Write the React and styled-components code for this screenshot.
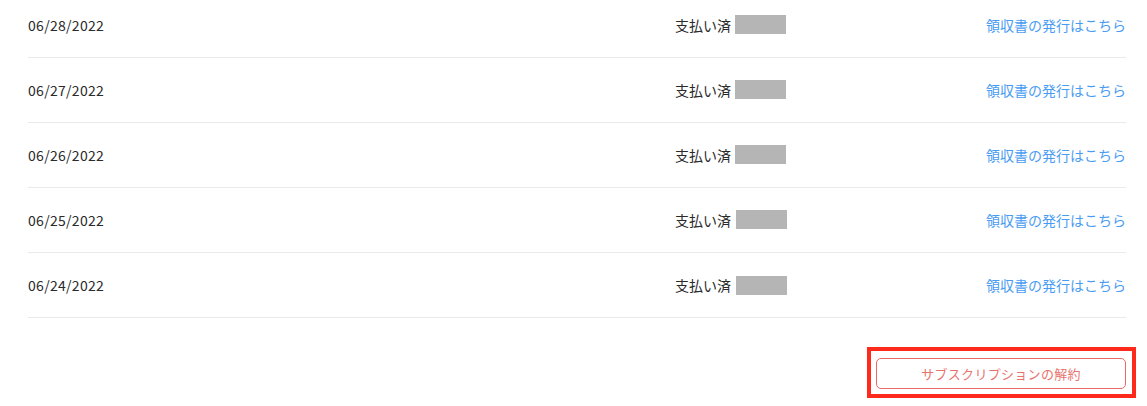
import React from 'react';
import styled, { createGlobalStyle } from 'styled-components';

const GlobalStyle = createGlobalStyle`
  html, body {
    margin: 0;
    padding: 0;
    background: #fff;
  }
  body {
    font-family: "Noto Sans CJK JP", "Liberation Sans", sans-serif;
    color: #222;
  }
`;

const Page = styled.div`
  width: 1147px;
  height: 406px;
  overflow: hidden;
  padding: 0 21px 0 28px;
  box-sizing: border-box;
`;

const List = styled.div`
  margin-top: -7px;
`;

const Row = styled.div`
  display: grid;
  grid-template-columns: 647px 1fr auto;
  align-items: center;
  height: 64px;
  border-bottom: 1px solid #e9e9e9;
  font-size: 14px;
`;

const DateCell = styled.span`
  letter-spacing: 0.3px;
  color: #2a2a2a;
`;

const Status = styled.span`
  display: flex;
  align-items: center;
  color: #2a2a2a;
`;

const Redacted = styled.span`
  display: inline-block;
  width: 51px;
  height: 19px;
  margin-left: ${(p) => p.$offset}px;
  margin-top: ${(p) => p.$lift}px;
  background: #b5b5b5;
`;

const ReceiptLink = styled.a`
  color: #4a9cf2;
  text-decoration: none;
  cursor: pointer;
`;

const Footer = styled.div`
  display: flex;
  justify-content: flex-end;
  padding-top: 40px;
`;

const Highlight = styled.div`
  position: relative;
`;

const Marker = styled.div`
  position: absolute;
  top: -11px;
  bottom: -9px;
  left: -9px;
  right: -10px;
  border: 4px solid #ff2a1c;
  pointer-events: none;
`;

const CancelButton = styled.button`
  width: 250px;
  height: 31px;
  border: 1px solid #ea6a66;
  border-radius: 5px;
  background: #fff;
  color: #e8736e;
  font-family: "Noto Sans CJK JP", sans-serif;
  font-size: 13px;
  letter-spacing: 0.3px;
  cursor: pointer;
`;

const payments = [
  { date: '06/28/2022', offset: 4, lift: -2 },
  { date: '06/27/2022', offset: 4, lift: -2 },
  { date: '06/26/2022', offset: 4, lift: -2 },
  { date: '06/25/2022', offset: 5, lift: -1 },
  { date: '06/24/2022', offset: 5, lift: 1 },
];

const App = () => (
  <>
    <GlobalStyle />
    <Page>
      <List>
        {payments.map((p) => (
          <Row key={p.date}>
            <DateCell>{p.date}</DateCell>
            <Status>
              支払い済
              <Redacted $offset={p.offset} $lift={p.lift} />
            </Status>
            <ReceiptLink>領収書の発行はこちら</ReceiptLink>
          </Row>
        ))}
      </List>
      <Footer>
        <Highlight>
          <CancelButton>サブスクリプションの解約</CancelButton>
          <Marker />
        </Highlight>
      </Footer>
    </Page>
  </>
);

export default App;
